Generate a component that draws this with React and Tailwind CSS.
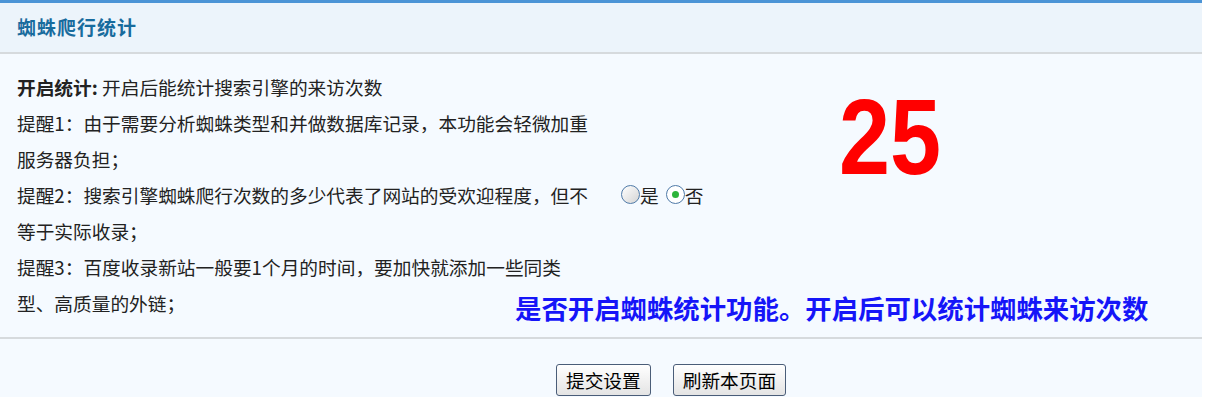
import React from "react";

const LINES = [
    "提醒1：由于需要分析蜘蛛类型和并做数据库记录，本功能会轻微加重",
    "服务器负担；",
    "提醒2：搜索引擎蜘蛛爬行次数的多少代表了网站的受欢迎程度，但不",
    "等于实际收录；",
    "提醒3：百度收录新站一般要1个月的时间，要加快就添加一些同类",
];

function Radio({ checked }) {
    return (
        <span
            className={
                "w-[19px] h-[19px] rounded-full border-[1.5px] border-[#4f7aa8] flex items-center justify-center " +
                (checked ? "bg-white" : "bg-linear-to-br from-white to-[#d4d4d4]")
            }
        >
            {checked && <span className="w-[7px] h-[7px] rounded-full bg-[#2db43a]" />}
        </span>
    );
}

function Button({ children }) {
    return (
        <button
            type="button"
            className="h-[32px] px-[9px] border border-[#4a5d78] rounded-[3px] bg-linear-to-b from-white to-[#e4e4e4] text-[18.7px] leading-[30px] text-black"
        >
            {children}
        </button>
    );
}

export default function App() {
    return (
        <div className="w-[1206px] h-[397px] overflow-hidden bg-white font-['Noto_Sans_CJK_SC','Noto_Sans',sans-serif] text-[#222]">
            <div className="w-[1202px] h-full bg-[#f5faff]">
                <div className="h-[3px] bg-[#4b94d6]" />
                <div className="h-[51px] bg-[#ecf4fb] border-b-2 border-[#d6dadd] flex items-center pl-[17px]">
                    <span className="text-[19px] font-bold tracking-[1px] text-[#186b9d]">
                        蜘蛛爬行统计
                    </span>
                </div>

                <div className="flex pt-[15px] pb-[16px] border-b-2 border-[#d6dadd]">
                    {/* description */}
                    <div className="w-[620px] pl-[17px] text-[18.7px]">
                        <div className="h-9 leading-9 whitespace-nowrap">
                            <b>开启统计:</b> 开启后能统计搜索引擎的来访次数
                        </div>
                        {LINES.map((line) => (
                            <div key={line} className="h-9 leading-9 whitespace-nowrap">
                                {line}
                            </div>
                        ))}
                        <div className="h-9 flex items-end whitespace-nowrap">
                            <span className="w-[498px] shrink-0 leading-9">型、高质量的外链；</span>
                            <span className="text-[26.4px] leading-[26px] font-bold text-[#1515f8]">
                                是否开启蜘蛛统计功能。开启后可以统计蜘蛛来访次数
                            </span>
                        </div>
                    </div>

                    {/* switch */}
                    <div className="w-[219px] flex items-center pl-[1px]">
                        <div className="flex items-center text-[18.7px]">
                            <Radio />
                            <span className="mr-[7px]">是</span>
                            <Radio checked />
                            <span>否</span>
                        </div>
                    </div>

                    {/* count */}
                    <div className="pt-[14px]">
                        <div className="origin-left scale-x-[0.85] text-[108px] leading-none font-bold text-[#ff0000] font-['Liberation_Sans',Arial,sans-serif]">
                            25
                        </div>
                    </div>
                </div>

                <div className="flex gap-[22px] pl-[556px] pt-[25px]">
                    <Button>提交设置</Button>
                    <Button>刷新本页面</Button>
                </div>
            </div>
        </div>
    );
}
